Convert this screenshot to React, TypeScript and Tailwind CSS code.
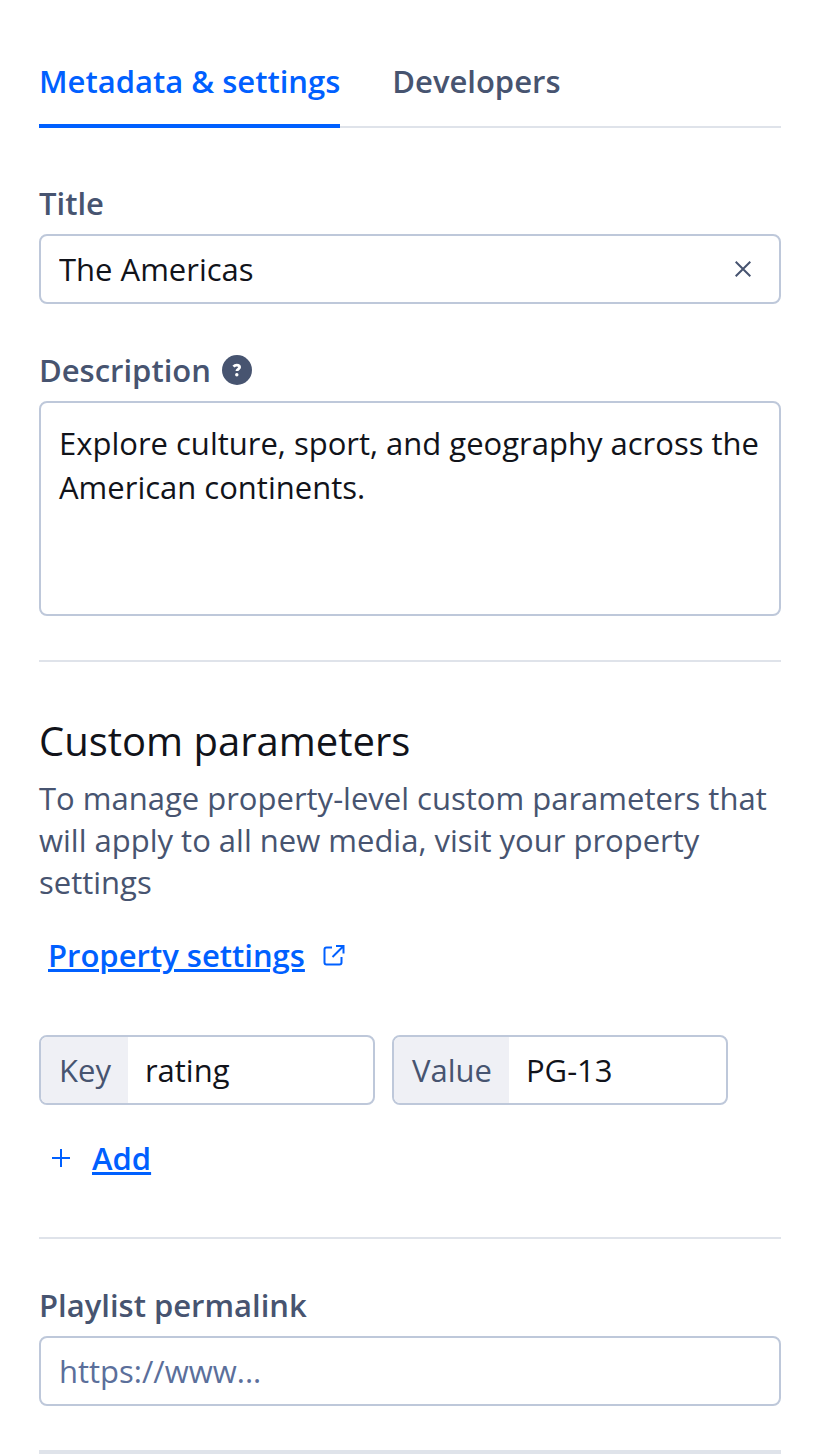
import { useState } from "react";
import type { ReactNode } from "react";

const tabs = ["Metadata & settings", "Developers"];

function Label({ htmlFor, children }: { htmlFor: string; children: ReactNode }) {
  return (
    <label htmlFor={htmlFor} className="leading-[38px] font-semibold text-[#475470]">
      {children}
    </label>
  );
}

function AddonInput({ id, label, initial }: { id: string; label: string; initial: string }) {
  const [value, setValue] = useState(initial);

  return (
    <div className="flex h-[70px] min-w-0 flex-1 overflow-hidden rounded-lg border-2 border-[#bec8da]">
      <label htmlFor={id} className="flex items-center bg-[#eff0f5] pr-[17px] pl-[18px] text-[#475470]">
        {label}
      </label>
      <input
        id={id}
        value={value}
        onChange={(e) => setValue(e.target.value)}
        className="w-full min-w-0 pr-[18px] pl-[17px] outline-none"
      />
    </div>
  );
}

export default function App() {
  const [activeTab, setActiveTab] = useState(0);
  const [title, setTitle] = useState("The Americas");
  const [description, setDescription] = useState(
    "Explore culture, sport, and geography across the American continents."
  );
  const [permalink, setPermalink] = useState("");

  return (
    <main className="bg-white pt-[52px] pr-[47px] pl-[39px] font-['Open_Sans',sans-serif] text-[31px] leading-[44px] text-[#11131a]">
      {/* Tabs */}
      <nav className="flex gap-[52px] border-b-2 border-[#dfe3ea]" role="tablist">
        {tabs.map((tab, i) => (
          <button
            key={tab}
            type="button"
            role="tab"
            aria-selected={activeTab === i}
            onClick={() => setActiveTab(i)}
            className={`-mb-0.5 border-b-4 pb-3.5 leading-[58px] font-semibold whitespace-nowrap
              ${activeTab === i
                ? "border-[#0060ff] text-[#0060ff]"
                : "border-transparent text-[#475470]"
              }`}
          >
            {tab}
          </button>
        ))}
      </nav>

      {/* Title */}
      <div className="mt-14 flex flex-col gap-3">
        <Label htmlFor="title">Title</Label>
        <div className="flex h-[70px] items-center rounded-lg border-2 border-[#bec8da]">
          <input
            id="title"
            value={title}
            onChange={(e) => setTitle(e.target.value)}
            className="min-w-0 flex-1 pl-[18px] outline-none"
          />
          <button type="button" aria-label="Clear title" onClick={() => setTitle("")} className="px-7">
            <svg className="size-4" viewBox="0 0 16 16" fill="none" stroke="#475470" strokeWidth="2">
              <path d="M.7.7l14.6 14.6M15.3.7L.7 15.3" />
            </svg>
          </button>
        </div>
      </div>

      {/* Description */}
      <div className="mt-[47px] flex flex-col gap-3">
        <div className="flex items-center gap-[11px]">
          <Label htmlFor="description">Description</Label>
          <button
            type="button"
            aria-label="About the description"
            className="flex size-[30px] items-center justify-center rounded-full bg-[#475470]"
          >
            <svg className="size-[30px]" viewBox="0 0 30 30" fill="none">
              <path
                d="M11.5 11.7c.9-1.1 2-1.6 3.3-1.6 1.7 0 2.8.8 2.8 2.2 0 1.8-2.7 1.9-2.7 3.8"
                stroke="#fff"
                strokeWidth="2.8"
              />
              <circle cx="14.8" cy="19.7" r="1.7" fill="#fff" />
            </svg>
          </button>
        </div>
        <textarea
          id="description"
          value={description}
          onChange={(e) => setDescription(e.target.value)}
          className="block h-[215px] w-full resize-none rounded-lg border-2 border-[#bec8da] py-[18px] pr-3 pl-[18px] outline-none"
        />
      </div>

      <hr className="mt-11 border-t-2 border-[#dfe3ea]" />

      {/* Custom parameters */}
      <section className="mt-[50px]">
        <h2 className="text-[40px] leading-[58px]">Custom parameters</h2>
        <p className="mt-[7px] leading-[42px] text-[#475470]">
          To manage property-level custom parameters that will apply to all new media, visit your
          property settings
        </p>
        <a href="#settings" className="mt-[31px] ml-[9px] flex w-fit items-center gap-[17px] leading-[42px] font-semibold text-[#0060ff]">
          <span className="underline decoration-[3px]">Property settings</span>
          <svg className="size-6" viewBox="0 0 24 24" fill="none" stroke="currentColor" strokeWidth="2">
            <path d="M10 4.5H4.5a2 2 0 0 0-2 2v13a2 2 0 0 0 2 2h13a2 2 0 0 0 2-2V14" />
            <path d="M14 3h7.500v7.500M21 3.500L10.500 14" />
          </svg>
        </a>

        <div className="mt-[59px] mr-[53px] flex gap-[17px]">
          <AddonInput id="param-key" label="Key" initial="rating" />
          <AddonInput id="param-value" label="Value" initial="PG-13" />
        </div>
        <button type="button" className="mt-8 ml-[13px] flex items-center gap-[22px] leading-[42px] font-semibold text-[#0060ff]">
          <svg className="size-[18px]" viewBox="0 0 18 18" fill="none" stroke="currentColor" strokeWidth="2">
            <path d="M9 0v18M0 9h18" />
          </svg>
          <span className="underline decoration-[3px]">Add</span>
        </button>
      </section>

      <hr className="mt-[58px] border-t-2 border-[#dfe3ea]" />

      {/* Permalink */}
      <div className="mt-[47px] flex flex-col gap-3">
        <Label htmlFor="permalink">Playlist permalink</Label>
        <input
          id="permalink"
          type="url"
          value={permalink}
          onChange={(e) => setPermalink(e.target.value)}
          placeholder="https://www..."
          className="h-[70px] w-full rounded-lg border-2 border-[#bec8da] px-[18px] outline-none placeholder:text-[#5b6f9b]"
        />
      </div>

      <hr className="mt-11 border-t-4 border-[#dfe3ea]" />
    </main>
  );
}
